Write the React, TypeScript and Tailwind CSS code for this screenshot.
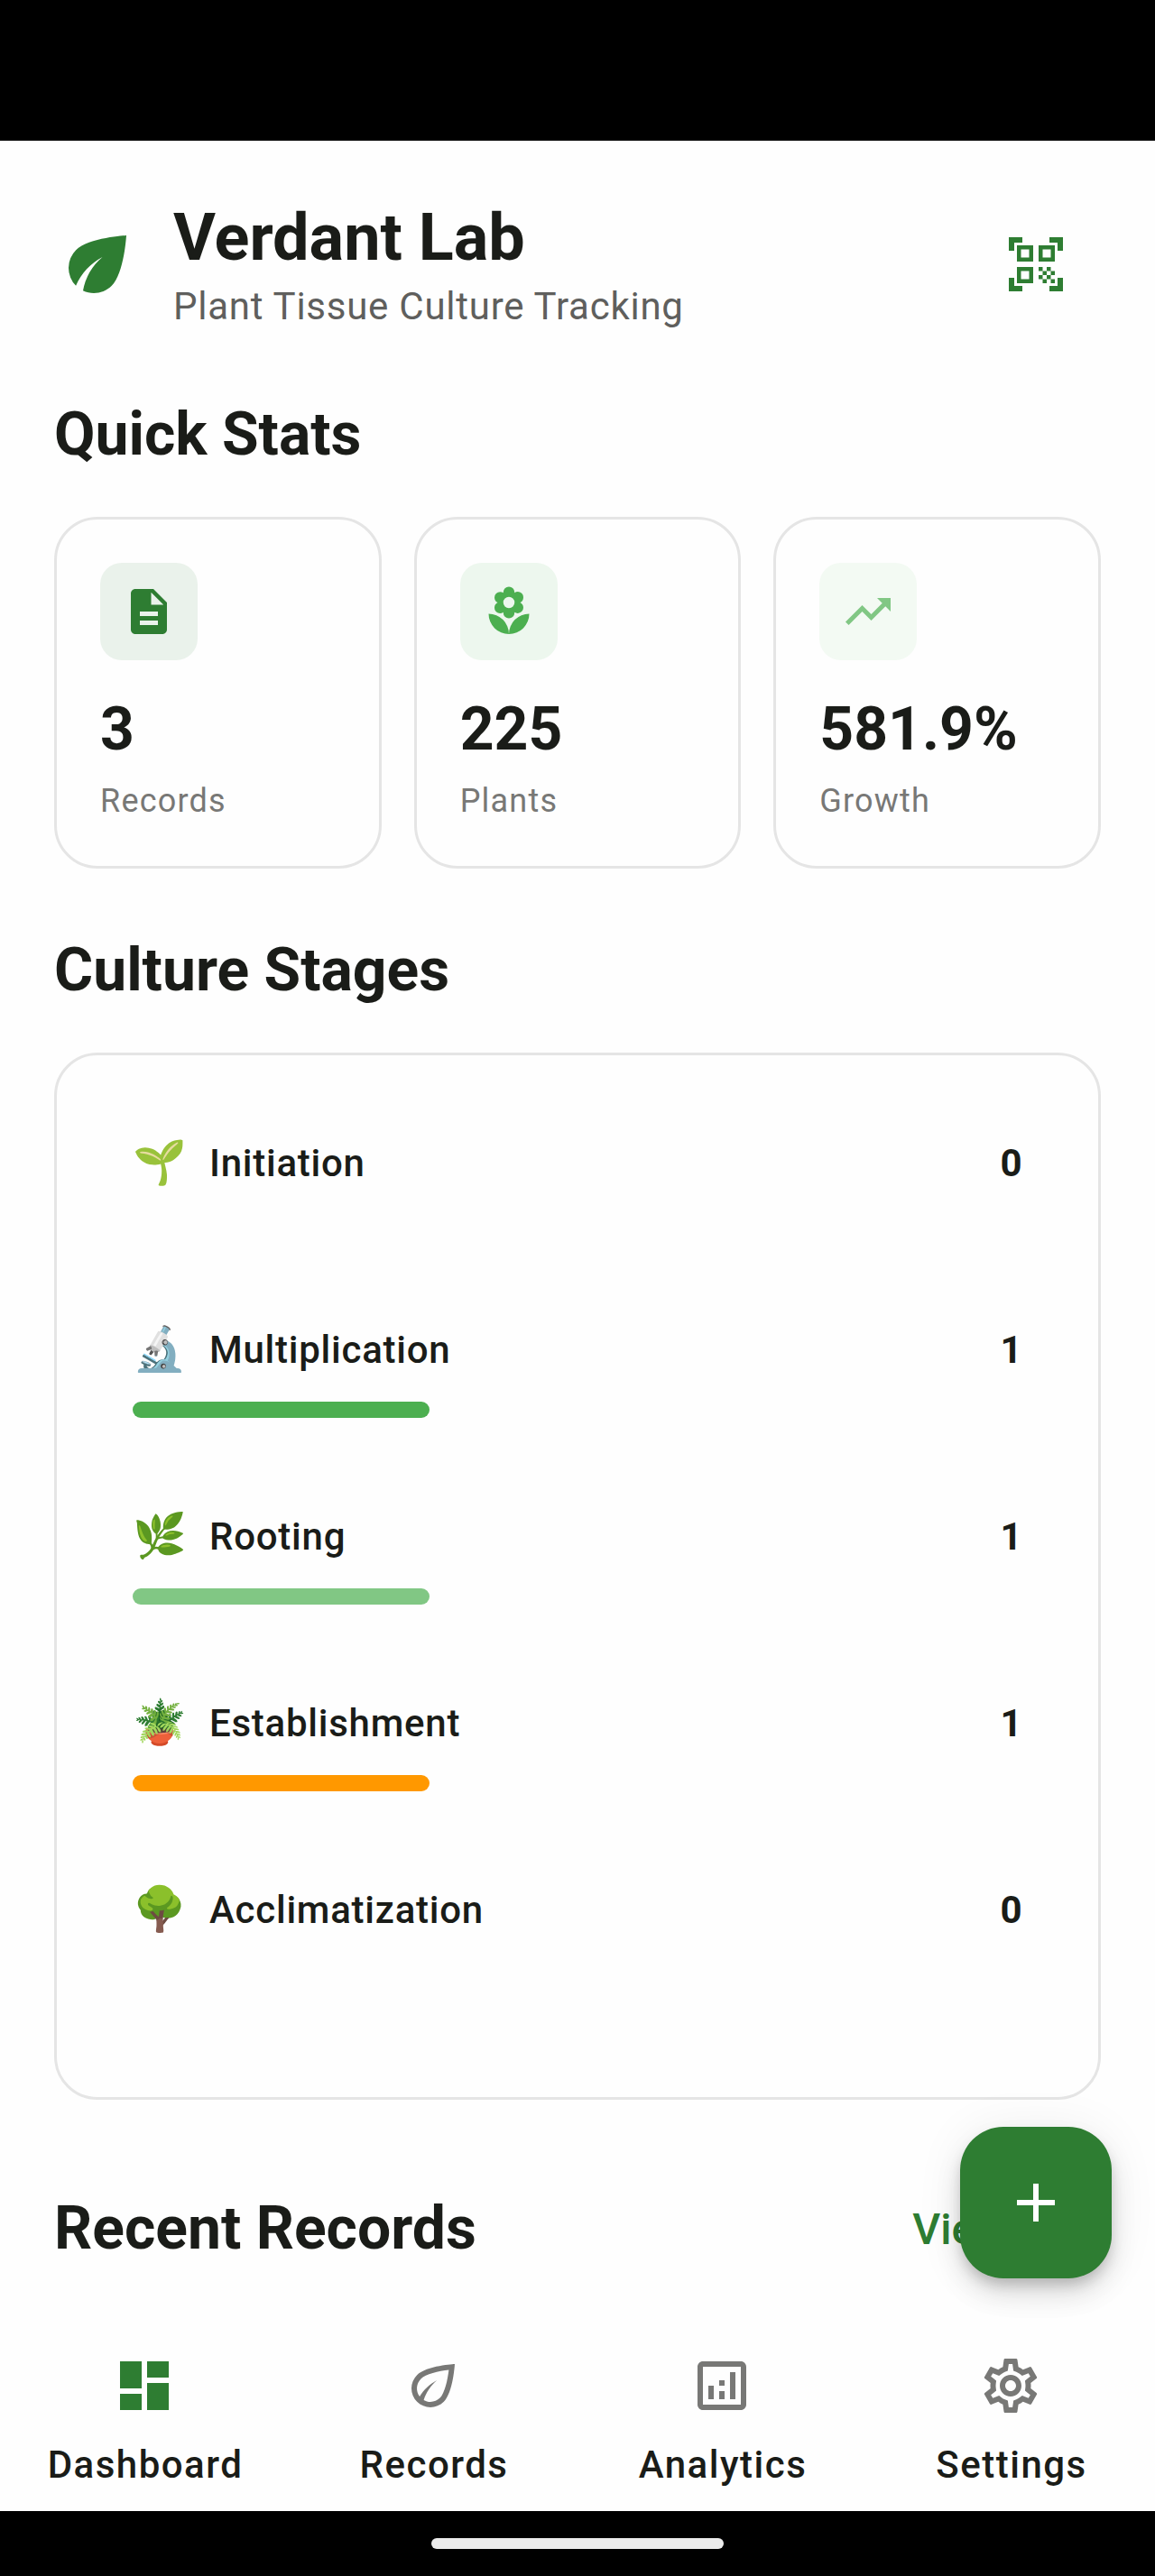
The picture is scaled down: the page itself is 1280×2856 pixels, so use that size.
import { FC } from "react";
import { IconType } from "react-icons";
import {
  MdAdd,
  MdDashboard,
  MdDescription,
  MdEco,
  MdLocalFlorist,
  MdOutlineAnalytics,
  MdOutlineEco,
  MdOutlineSettings,
  MdQrCodeScanner,
  MdTrendingUp,
} from "react-icons/md";

interface Stat {
  label: string;
  value: string;
  icon: IconType;
  iconColor: string;
  iconBg: string;
}

interface Stage {
  emoji: string;
  name: string;
  count: number;
  barColor: string;
}

interface NavItem {
  label: string;
  icon: IconType;
  iconColor: string;
}

const stats: Stat[] = [
  { label: "Records", value: "3", icon: MdDescription, iconColor: "text-[#2e7d32]", iconBg: "bg-[#eaf2eb]" },
  { label: "Plants", value: "225", icon: MdLocalFlorist, iconColor: "text-[#4caf50]", iconBg: "bg-[#edf7ee]" },
  { label: "Growth", value: "581.9%", icon: MdTrendingUp, iconColor: "text-[#81c784]", iconBg: "bg-[#f3faf3]" },
];

const stages: Stage[] = [
  { emoji: "🌱", name: "Initiation", count: 0, barColor: "bg-[#2e7d32]" },
  { emoji: "🔬", name: "Multiplication", count: 1, barColor: "bg-[#4caf50]" },
  { emoji: "🌿", name: "Rooting", count: 1, barColor: "bg-[#81c784]" },
  { emoji: "🪴", name: "Establishment", count: 1, barColor: "bg-[#ff9800]" },
  { emoji: "🌳", name: "Acclimatization", count: 0, barColor: "bg-[#795548]" },
];

const navItems: NavItem[] = [
  { label: "Dashboard", icon: MdDashboard, iconColor: "text-[#2e7d32]" },
  { label: "Records", icon: MdOutlineEco, iconColor: "text-[#787876]" },
  { label: "Analytics", icon: MdOutlineAnalytics, iconColor: "text-[#787876]" },
  { label: "Settings", icon: MdOutlineSettings, iconColor: "text-[#787876]" },
];

const total = stages.reduce((sum, stage) => sum + stage.count, 0);

const SectionTitle: FC<{ title: string }> = ({ title }) => (
  <h2 className="pb-0.5 text-[66px] leading-[82px] font-bold">{title}</h2>
);

const StatCard: FC<{ stat: Stat }> = ({ stat }) => (
  <div className="flex-1 h-[390px] border-3 border-[#e5e5e5] rounded-[48px] p-12">
    <div className={`w-[108px] h-[108px] ${stat.iconBg} rounded-3xl flex items-center justify-center`}>
      <stat.icon size={60} className={stat.iconColor} />
    </div>
    <p className="mt-9 pb-0.5 text-[66px] leading-[82px] font-bold">{stat.value}</p>
    <p className="mt-3 text-4xl leading-[48px] tracking-[1.2px] text-[#787876]">{stat.label}</p>
  </div>
);

const StageRow: FC<{ stage: Stage }> = ({ stage }) => (
  <div className="h-[207px] pt-9">
    <div className="flex items-center h-[72px]">
      <span className="w-[60px] pb-0.5 text-[48px] leading-[60px] font-['Noto_Color_Emoji']">{stage.emoji}</span>
      <span className="ml-[25px] flex-1 text-[42px] leading-[60px] font-medium tracking-[0.75px]">{stage.name}</span>
      <span className="text-[42px] leading-[60px] font-bold tracking-[0.3px]">{stage.count}</span>
    </div>
    <div className="mt-[21px] h-[18px]">
      <div
        className={`h-full rounded-full ${stage.barColor}`}
        style={{ width: `${(stage.count / total) * 100}%` }}
      />
    </div>
  </div>
);

const App: FC = () => (
  <div className="relative w-[1280px] h-[2856px] flex flex-col overflow-hidden bg-[#fefefe] text-[#1a1c18] font-['Roboto',sans-serif]">
    <div className="h-[156px] shrink-0 bg-black" />

    <main className="flex-1 px-[60px] pt-[59px] overflow-hidden">
      <header className="flex items-center h-[156px]">
        <MdEco size={96} className="text-[#2e7d32]" />
        <div className="ml-9 flex-1">
          <h1 className="pt-0.5 text-7xl leading-[94px] font-bold">Verdant Lab</h1>
          <p className="pb-0.5 text-[42px] leading-[58px] tracking-[0.75px] text-[#5f5f5d]">Plant Tissue Culture Tracking</p>
        </div>
        <button className="w-36 h-36 flex items-center justify-center">
          <MdQrCodeScanner size={72} className="text-[#2e7d32]" />
        </button>
      </header>

      <section className="mt-[70px]">
        <SectionTitle title="Quick Stats" />
        <div className="mt-12 flex gap-9">
          {stats.map((stat) => (
            <StatCard key={stat.label} stat={stat} />
          ))}
        </div>
      </section>

      <section className="mt-[72px]">
        <SectionTitle title="Culture Stages" />
        <div className="mt-12 h-[1161px] border-3 border-[#e5e5e5] rounded-[48px] px-[84px] pt-12">
          {stages.map((stage) => (
            <StageRow key={stage.name} stage={stage} />
          ))}
        </div>
      </section>

      <section className="mt-[72px] h-36 flex items-center justify-between">
        <SectionTitle title="Recent Records" />
        <button className="pr-9 text-5xl font-medium text-[#2e7d32]">View All</button>
      </section>
    </main>

    <nav className="h-60 shrink-0 flex">
      {navItems.map((item) => (
        <div key={item.label} className="flex-1 flex flex-col items-center pt-[65px]">
          <item.icon size={72} className={item.iconColor} />
          <span className="mt-[22px] pl-0.5 text-[42px] leading-[60px] font-medium tracking-[1.5px]">{item.label}</span>
        </div>
      ))}
    </nav>

    <div className="h-[72px] shrink-0 bg-black flex justify-center pt-[30px]">
      <div className="w-[324px] h-3 rounded-full bg-[#ebebeb]" />
    </div>

    <button className="absolute right-12 bottom-[330px] w-[168px] h-[168px] rounded-[48px] bg-[#2e7d32] flex items-center justify-center shadow-[0_9px_15px_-3px_rgba(0,0,0,0.2),0_18px_30px_0_rgba(0,0,0,0.11),0_3px_54px_0_rgba(0,0,0,0.07)]">
      <MdAdd size={72} className="text-white" />
    </button>
  </div>
);

export default App;
